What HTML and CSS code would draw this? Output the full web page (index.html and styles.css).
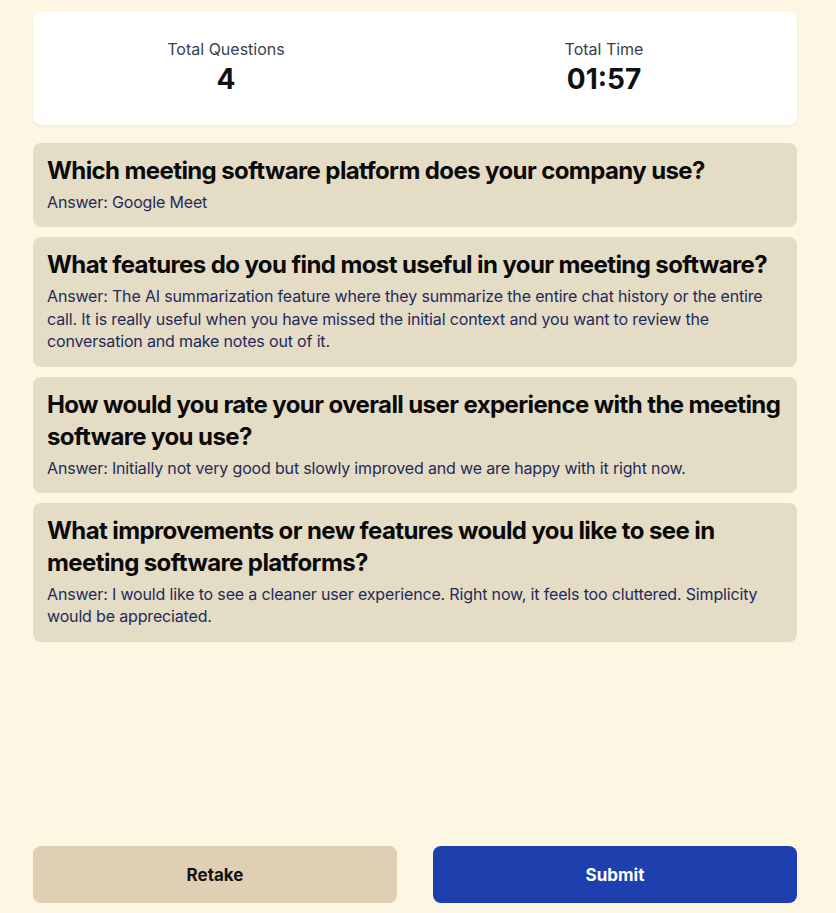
FILE: index.html
```html
<!DOCTYPE html>
<html lang="en">
<head>
<meta charset="utf-8">
<title>Summary</title>
<link rel="stylesheet" href="styles.css">
</head>
<body>
<div class="page">
  <div class="content">
    <section class="stats">
      <div class="stat">
        <div class="stat-label">Total Questions</div>
        <div class="stat-value">4</div>
      </div>
      <div class="stat">
        <div class="stat-label">Total Time</div>
        <div class="stat-value">01:57</div>
      </div>
    </section>
    <section class="qa-list">
      <div class="qa">
        <h2 class="qa-q">Which meeting software platform does your company use?</h2>
        <p class="qa-a">Answer: Google Meet</p>
      </div>
      <div class="qa">
        <h2 class="qa-q">What features do you find most useful in your meeting software?</h2>
        <p class="qa-a">Answer: The AI summarization feature where they summarize the entire chat history or the entire call. It is really useful when you have missed the initial context and you want to review the conversation and make notes out of it.</p>
      </div>
      <div class="qa">
        <h2 class="qa-q">How would you rate your overall user experience with the meeting software you use?</h2>
        <p class="qa-a">Answer: Initially not very good but slowly improved and we are happy with it right now.</p>
      </div>
      <div class="qa">
        <h2 class="qa-q">What improvements or new features would you like to see in meeting software platforms?</h2>
        <p class="qa-a">Answer: I would like to see a cleaner user experience. Right now, it feels too cluttered. Simplicity would be appreciated.</p>
      </div>
    </section>
  </div>
  <div class="actions">
    <button class="btn btn-retake">Retake</button>
    <button class="btn btn-submit">Submit</button>
  </div>
</div>
</body>
</html>
```
FILE: styles.css
```css
* { box-sizing: border-box; }
html, body { margin: 0; padding: 0; height: 100%; }
body {
  background: #fdf6e3;
  font-family: Inter, "Noto Sans", sans-serif;
  color: #111;
}
.page {
  height: 913px;
  display: flex;
  flex-direction: column;
  justify-content: space-between;
  padding: 12px 39px 10px 33px;
}
.content { display: flex; flex-direction: column; gap: 18px; }
.stats {
  background: #fff;
  border-radius: 8px;
  box-shadow: 0 1px 3px rgba(0,0,0,0.06);
  display: grid;
  grid-template-columns: 1fr 1fr;
  padding: 25px 4px 28px;
  height: 113px;
}
.stat { text-align: center; }
.stat-label { font-size: 16px; line-height: 24px; color: #374151; }
.stat-value { font-size: 28px; line-height: 36px; font-weight: 700; color: #111; }
.qa-list { display: flex; flex-direction: column; gap: 10px; }
.qa {
  background: #e5dcc5;
  border-radius: 8px;
  padding: 12px 14px 14px;
}
.qa-q {
  margin: 0 0 4px;
  font-size: 24px;
  line-height: 32px;
  font-weight: 700;
  letter-spacing: -0.025em;
  color: #0a0a0a;
}
.qa-a {
  margin: 0;
  font-size: 16px;
  line-height: 1.4;
  letter-spacing: -0.01em;
  color: #1f2a5a;
}
.actions { display: flex; gap: 36px; }
.btn {
  flex: 1;
  height: 57px;
  border: none;
  border-radius: 8px;
  font-family: Inter, "Noto Sans", sans-serif;
  font-size: 17px;
  font-weight: 700;
  cursor: pointer;
}
.btn-retake { background: #dfd0b4; color: #111; }
.btn-submit { background: #1e40af; color: #fff; }
```
